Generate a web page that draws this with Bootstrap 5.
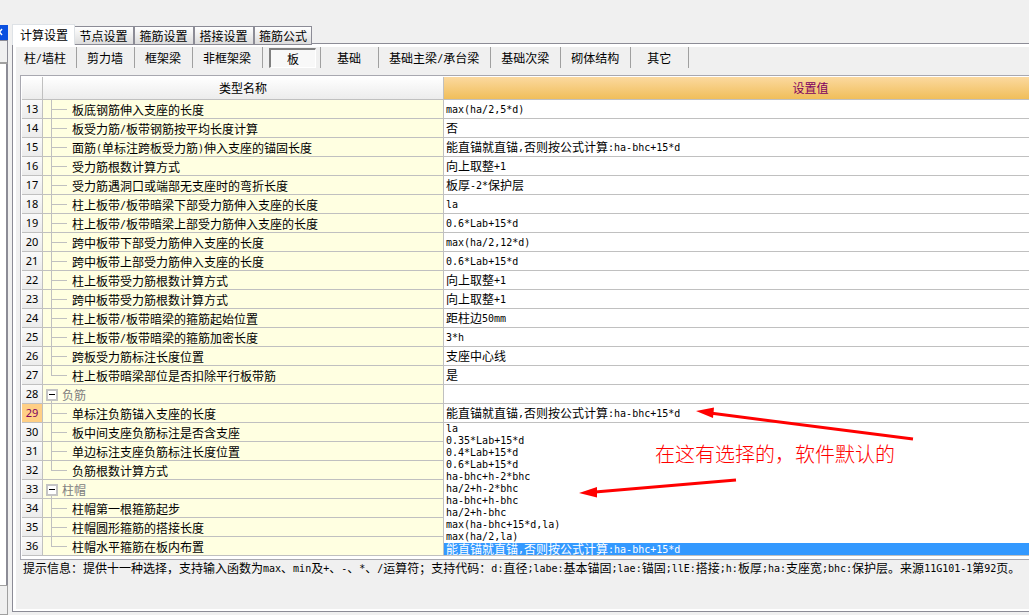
<!DOCTYPE html>
<html lang="zh-CN">
<head>
<meta charset="utf-8">
<meta name="viewport" content="width=device-width, initial-scale=1">
<title>计算设置</title>
<link href="https://cdn.jsdelivr.net/npm/bootstrap@5.3.0/dist/css/bootstrap.min.css" rel="stylesheet">
<style>
:root{--edge:#8c8c96;--rule:#c0c0c0;--face:#f0f0f0}
body{font:12px/18px "Noto Sans CJK SC",sans-serif;color:#000;background:var(--face)}
button{font:inherit;color:inherit}
.mono{font-family:"DejaVu Sans Mono",monospace;font-size:10px;line-height:1;vertical-align:1px}
/* sliver of the neighbouring dock */
.dock{width:8px;padding-top:25px}
.dock-close{height:15px;background:#0a50e0;color:#fff;line-height:14px;border:0}
.dock-head{height:24px;border:1px solid var(--edge);border-width:1px 1px 0 0;border-bottom:2px solid #a0a0a0}
.dock-body{border-right:2px solid var(--edge);background:#fff}
.dock-foot{height:30px;border:1px solid #a0a0a0;border-left:0}
/* settings tabs */
.work{padding:24px 0 3px 4px}
.set-tabs{border:0;margin-bottom:-1px;position:relative}
.set-tabs .nav-link{border:1px solid var(--edge);border-left-width:0;border-right-width:2px;border-radius:0;padding:0 5px 0 4px;line-height:17px;height:19px;width:60px;color:#000;background:linear-gradient(#fff,#dcdcdc);white-space:nowrap}
.set-tabs .nav-link.active{height:21px;width:63px;border-width:1px 1px 0;padding:0 7px;line-height:18px;background:#fff;color:#000}
.set-tabs .tab-last{width:57px;border-right-width:1px}
.pane{border:1px solid var(--edge);border-right:0;background:#fff;padding:3px 0 2px 3px}
.pane-in{background:var(--face)}
.kinds button{border:0;background:none;border-right:1px solid #a0a0a0;height:21px;padding:0 11px 0 10px;line-height:20px;white-space:nowrap;flex:none}
.kinds button:first-child{padding-left:8px;padding-right:10px}
.kinds .sunk{padding:0 5px 0 6px;width:58px}
.kinds .kind-short{width:58px}
.sunk span{display:block;height:20px;border:1px solid #fff;border-top:2px solid #808080;border-left:2px solid #808080;background:#f8f8f8;line-height:17px;width:47px}
/* grid */
.grid-frame{margin:7px 0 0 4px;border:1px solid #a8a8b0;border-right:0;padding:1px 0 3px 1px;background:#fff}
.clip{overflow:hidden}
.grid{table-layout:fixed;border-collapse:separate;border-spacing:0;width:100%;min-width:1156px;margin:0}
.grid th,.grid td{border:0 solid var(--rule);border-width:0 1px 1px 0;padding:0;font-weight:400;height:19px;line-height:18px;white-space:nowrap}
.grid thead th{height:23px;text-align:center;background:linear-gradient(#fff,#ececec);line-height:22px}
.grid thead th.picked{background:linear-gradient(#fbd99f,#f0be5a);color:#800060}
.c-num{width:21px}.c-name{width:401px}
.grid tbody th{background:linear-gradient(#fafafa,#ececec);text-align:center;font:11px/18px "Noto Sans",sans-serif}
.grid tbody th.picked{background:#ffcf85;color:#800060}
.grid td:nth-child(2){background-color:#ffffe1;background-repeat:no-repeat;background-image:linear-gradient(var(--rule),var(--rule)),linear-gradient(var(--rule),var(--rule));background-position:8px 0,9px 9px;background-size:1px 100%,15px 1px;padding:1px 0 0 29px;line-height:17px}
.grid tr.end td:nth-child(2){background-size:1px 10px,15px 1px}
.grid tr.group td:nth-child(2){background-size:1px 4px,0 0;background-position:8px 15px,0 0;padding-left:3px;color:#808080}
.grid td:nth-child(3){padding-left:2px;line-height:16px}
.fold{width:12px;height:12px;border:2px solid #c4c4c4;background:#fff;padding:0;margin-right:4px;display:flex;align-items:center;justify-content:center}
.fold::before{content:"";width:6px;height:1px;background:#000}
.combo{border:0;background:none;padding:0;line-height:16px;display:block}
.choices{--bs-dropdown-min-width:100%;position:absolute;top:347px;left:423px;right:0;border:0;border-radius:0;padding:0;margin:0;font-size:12px;background:#fff}
.choices .dropdown-item{height:12px;line-height:12px;padding:0 0 0 2px;color:#000}
.choices .dropdown-item.active{background:#3399ff;color:#fff}
/* notes drawn over the grid */
.note{position:absolute;left:634px;top:363px;font-size:20px;font-weight:300;line-height:30px;color:#f00;z-index:1002;white-space:nowrap}
.arrows{position:absolute;left:554px;top:325px;z-index:1001;pointer-events:none}
.hint{padding-left:7px;line-height:16px;white-space:nowrap;overflow:hidden}
</style>
</head>
<body>
<div class="d-flex vh-100 overflow-hidden">
<aside class="dock d-flex flex-column flex-shrink-0 overflow-hidden">
<button class="dock-close p-0 text-start" aria-label="关闭"><svg class="d-block" width="7" height="15" aria-hidden="true"><path d="M-3 4l5 6M2 4l-5 6" stroke="#fff" stroke-width="1.5"/></svg></button>
<div class="dock-head mt-0"></div><div class="dock-body flex-grow-1"></div><div class="dock-foot"></div>
</aside>
<main class="work d-flex flex-column flex-grow-1 overflow-hidden">
<div class="nav nav-tabs set-tabs flex-nowrap align-items-end" role="tablist">
<button class="nav-link active" role="tab" aria-selected="true">计算设置</button>
<button class="nav-link" role="tab">节点设置</button>
<button class="nav-link" role="tab">箍筋设置</button>
<button class="nav-link" role="tab">搭接设置</button>
<button class="nav-link tab-last" role="tab">箍筋公式</button>
</div>
<section class="pane flex-grow-1 d-flex">
<div class="pane-in flex-grow-1 overflow-hidden">
<div class="kinds d-flex">
<button>柱<span class="mono">/</span>墙柱</button><button>剪力墙</button><button>框架梁</button><button>非框架梁</button><button class="sunk" aria-pressed="true"><span>板</span></button><button class="kind-short">基础</button><button>基础主梁<span class="mono">/</span>承台梁</button><button>基础次梁</button><button>砌体结构</button><button class="kind-short">其它</button>
</div>
<div class="grid-frame position-relative">
<div class="clip">
<table class="grid">
<colgroup><col class="c-num"><col class="c-name"><col></colgroup>
<thead><tr><th></th><th scope="col">类型名称</th><th scope="col" class="picked">设置值</th></tr></thead>
<tbody>
<tr><th>13</th><td>板底钢筋伸入支座的长度</td><td><span class="mono">max(ha/2,5*d)</span></td></tr>
<tr><th>14</th><td>板受力筋<span class="mono">/</span>板带钢筋按平均长度计算</td><td>否</td></tr>
<tr><th>15</th><td>面筋<span class="mono">(</span>单标注跨板受力筋<span class="mono">)</span>伸入支座的锚固长度</td><td>能直锚就直锚<span class="mono">,</span>否则按公式计算<span class="mono">:ha-bhc+15*d</span></td></tr>
<tr><th>16</th><td>受力筋根数计算方式</td><td>向上取整<span class="mono">+1</span></td></tr>
<tr><th>17</th><td>受力筋遇洞口或端部无支座时的弯折长度</td><td>板厚<span class="mono">-2*</span>保护层</td></tr>
<tr><th>18</th><td>柱上板带<span class="mono">/</span>板带暗梁下部受力筋伸入支座的长度</td><td><span class="mono">la</span></td></tr>
<tr><th>19</th><td>柱上板带<span class="mono">/</span>板带暗梁上部受力筋伸入支座的长度</td><td><span class="mono">0.6*Lab+15*d</span></td></tr>
<tr><th>20</th><td>跨中板带下部受力筋伸入支座的长度</td><td><span class="mono">max(ha/2,12*d)</span></td></tr>
<tr><th>21</th><td>跨中板带上部受力筋伸入支座的长度</td><td><span class="mono">0.6*Lab+15*d</span></td></tr>
<tr><th>22</th><td>柱上板带受力筋根数计算方式</td><td>向上取整<span class="mono">+1</span></td></tr>
<tr><th>23</th><td>跨中板带受力筋根数计算方式</td><td>向上取整<span class="mono">+1</span></td></tr>
<tr><th>24</th><td>柱上板带<span class="mono">/</span>板带暗梁的箍筋起始位置</td><td>距柱边<span class="mono">50mm</span></td></tr>
<tr><th>25</th><td>柱上板带<span class="mono">/</span>板带暗梁的箍筋加密长度</td><td><span class="mono">3*h</span></td></tr>
<tr><th>26</th><td>跨板受力筋标注长度位置</td><td>支座中心线</td></tr>
<tr class="end"><th>27</th><td>柱上板带暗梁部位是否扣除平行板带筋</td><td>是</td></tr>
<tr class="group"><th>28</th><td><div class="d-flex align-items-center"><button class="fold" aria-label="折叠负筋"></button>负筋</div></td><td></td></tr>
<tr><th class="picked">29</th><td>单标注负筋锚入支座的长度</td><td><button class="combo" aria-haspopup="listbox" aria-expanded="true">能直锚就直锚<span class="mono">,</span>否则按公式计算<span class="mono">:ha-bhc+15*d</span></button></td></tr>
<tr><th>30</th><td>板中间支座负筋标注是否含支座</td><td></td></tr>
<tr><th>31</th><td>单边标注支座负筋标注长度位置</td><td></td></tr>
<tr class="end"><th>32</th><td>负筋根数计算方式</td><td></td></tr>
<tr class="group"><th>33</th><td><div class="d-flex align-items-center"><button class="fold" aria-label="折叠柱帽"></button>柱帽</div></td><td></td></tr>
<tr><th>34</th><td>柱帽第一根箍筋起步</td><td></td></tr>
<tr><th>35</th><td>柱帽圆形箍筋的搭接长度</td><td></td></tr>
<tr class="end"><th>36</th><td>柱帽水平箍筋在板内布置</td><td></td></tr>
</tbody>
</table>
</div>
<div class="dropdown-menu show choices">
<button class="dropdown-item mono">la</button>
<button class="dropdown-item mono">0.35*Lab+15*d</button>
<button class="dropdown-item mono">0.4*Lab+15*d</button>
<button class="dropdown-item mono">0.6*Lab+15*d</button>
<button class="dropdown-item mono">ha-bhc+h-2*bhc</button>
<button class="dropdown-item mono">ha/2+h-2*bhc</button>
<button class="dropdown-item mono">ha-bhc+h-bhc</button>
<button class="dropdown-item mono">ha/2+h-bhc</button>
<button class="dropdown-item mono">max(ha-bhc+15*d,la)</button>
<button class="dropdown-item mono">max(ha/2,la)</button>
<button class="dropdown-item active">能直锚就直锚<span class="mono">,</span>否则按公式计算<span class="mono">:ha-bhc+15*d</span></button>
</div>
<div class="note">在这有选择的，软件默认的</div>
<svg class="arrows" width="350" height="100" aria-hidden="true"><g fill="#f00" stroke="#f00"><path d="M135 12L338 38M20 91L161 79" stroke-width="3"/><path d="M121 10L139 6.500L138 17zM4 92L22 86L22 96.500z" stroke="none"/></g></svg>
</div>
<div class="hint">提示信息：提供十一种选择，支持输入函数为<span class="mono">max</span>、<span class="mono">min</span>及<span class="mono">+</span>、<span class="mono">-</span>、<span class="mono">*</span>、<span class="mono">/</span>运算符；支持代码：<span class="mono">d:</span>直径<span class="mono">;labe:</span>基本锚固<span class="mono">;lae:</span>锚固<span class="mono">;llE:</span>搭接<span class="mono">;h:</span>板厚<span class="mono">;ha:</span>支座宽<span class="mono">;bhc:</span>保护层。来源<span class="mono">11G101-1</span>第<span class="mono">92</span>页。</div>
</div>
</section>
</main>
</div>
<script src="https://cdn.jsdelivr.net/npm/bootstrap@5.3.0/dist/js/bootstrap.bundle.min.js"></script>
</body>
</html>
